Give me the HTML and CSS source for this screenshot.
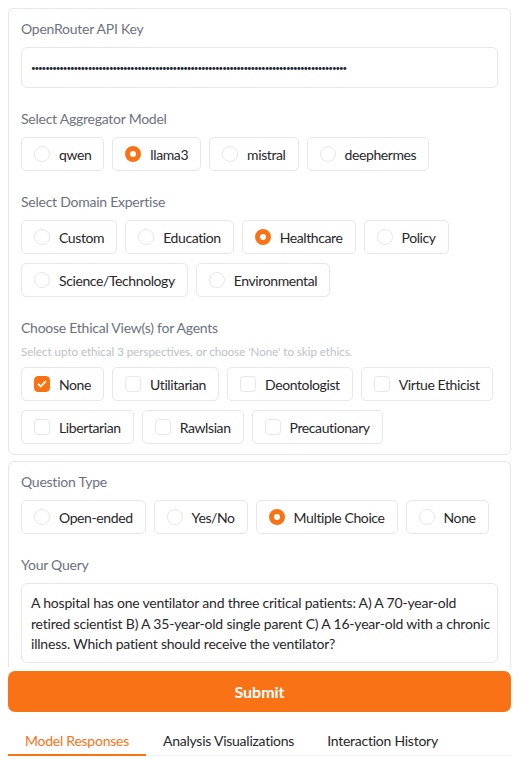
FILE: index.html
```html
<!DOCTYPE html>
<html>
<head>
<meta charset="utf-8">
<link rel="stylesheet" href="styles.css">
</head>
<body>
<div class="panel">
  <div class="field">
    <div class="label">OpenRouter API Key</div>
    <div class="input">•••••••••••••••••••••••••••••••••••••••••••••••••••••••••••••••••••••••••••••••••••••••••</div>
  </div>
  <div class="field">
    <div class="label">Select Aggregator Model</div>
    <div class="options">
      <div class="opt"><span class="radio"></span>qwen</div>
      <div class="opt"><span class="radio on"></span>llama3</div>
      <div class="opt"><span class="radio"></span>mistral</div>
      <div class="opt"><span class="radio"></span>deephermes</div>
    </div>
  </div>
  <div class="field">
    <div class="label">Select Domain Expertise</div>
    <div class="options">
      <div class="opt"><span class="radio"></span>Custom</div>
      <div class="opt"><span class="radio"></span>Education</div>
      <div class="opt"><span class="radio on"></span>Healthcare</div>
      <div class="opt"><span class="radio"></span>Policy</div>
      <div class="opt"><span class="radio"></span>Science/Technology</div>
      <div class="opt"><span class="radio"></span>Environmental</div>
    </div>
  </div>
  <div class="field">
    <div class="label">Choose Ethical View(s) for Agents</div>
    <div class="info">Select upto ethical 3 perspectives, or choose 'None' to skip ethics.</div>
    <div class="options">
      <div class="opt"><span class="check on"><svg viewBox="0 0 16 16" width="16" height="16"><path d="M4.6 8.3l2.2 2.2 4.6-4.9" fill="none" stroke="#fff" stroke-width="1.8" stroke-linecap="round" stroke-linejoin="round"/></svg></span>None</div>
      <div class="opt"><span class="check"></span>Utilitarian</div>
      <div class="opt"><span class="check"></span>Deontologist</div>
      <div class="opt"><span class="check"></span>Virtue Ethicist</div>
      <div class="opt"><span class="check"></span>Libertarian</div>
      <div class="opt"><span class="check"></span>Rawlsian</div>
      <div class="opt"><span class="check"></span>Precautionary</div>
    </div>
  </div>
</div>
<div class="panel panel2">
  <div class="field">
    <div class="label">Question Type</div>
    <div class="options">
      <div class="opt"><span class="radio"></span>Open-ended</div>
      <div class="opt"><span class="radio"></span>Yes/No</div>
      <div class="opt"><span class="radio on"></span>Multiple Choice</div>
      <div class="opt"><span class="radio"></span>None</div>
    </div>
  </div>
  <div class="field">
    <div class="label">Your Query</div>
    <div class="textarea">A hospital has one ventilator and three critical patients: A) A 70-year-old retired scientist B) A 35-year-old single parent C) A 16-year-old with a chronic illness. Which patient should receive the ventilator?</div>
  </div>
</div>
<button class="submit">Submit</button>
<div class="tabs">
  <div class="tab active">Model Responses</div>
  <div class="tab">Analysis Visualizations</div>
  <div class="tab">Interaction History</div>
</div>
</body>
</html>
```

FILE: styles.css
```css
* { box-sizing: border-box; }
body {
  margin: 0;
  padding: 8px 12px 0 8px;
  background: #fff;
  font-family: Lato, "Noto Sans", sans-serif;
  font-size: 14px;
  color: #27272a;
  letter-spacing: -0.25px;
}
.panel {
  border: 1px solid #e5e7eb;
  border-radius: 6px;
  padding: 11px 12px 10px;
  display: flex;
  flex-direction: column;
  gap: 22px;
}
.panel2 {
  margin-top: 6px;
  border-bottom: none;
  border-bottom-left-radius: 0;
  border-bottom-right-radius: 0;
  padding-bottom: 4px;
}
.field { display: flex; flex-direction: column; }
.label {
  color: #6b7280;
  font-size: 14px;
  line-height: 18px;
  margin-bottom: 9px;
}
.info {
  color: #bcc0c6;
  font-size: 11.5px;
  line-height: 14px;
  letter-spacing: 0;
  margin-top: -1px;
  margin-bottom: 8px;
}
.input {
  height: 41px;
  border: 1px solid #e5e7eb;
  border-radius: 6px;
  padding: 0 9px;
  display: flex;
  align-items: center;
  font-size: 8px;
  letter-spacing: -1.1px;
  color: #1f2937;
  overflow: hidden;
  white-space: nowrap;
}
.options {
  display: flex;
  flex-wrap: wrap;
  gap: 9px 8px;
}
.opt {
  height: 34px;
  border: 1px solid #e5e7eb;
  border-radius: 5px;
  padding: 0 12px;
  display: flex;
  align-items: center;
  gap: 9px;
  color: #27272a;
  font-size: 14px;
  letter-spacing: -0.4px;
  white-space: nowrap;
}
.radio {
  width: 16px;
  height: 16px;
  border-radius: 50%;
  border: 1px solid #e5e7eb;
  background: #fff;
  flex: none;
}
.radio.on {
  border: 5px solid #f97316;
  background: #fff;
}
.check {
  width: 16px;
  height: 16px;
  border-radius: 4px;
  border: 1px solid #e5e7eb;
  flex: none;
  display: flex;
}
.check.on {
  background: #f97316;
  border-color: #f97316;
}
.check.on svg { margin: -1px; }
.textarea {
  border: 1px solid #e5e7eb;
  border-radius: 6px;
  padding: 9px 7px 7px 9px;
  line-height: 20.5px;
  font-size: 14px;
  letter-spacing: -0.2px;
  color: #27272a;
  height: 80px;
}
.submit {
  display: block;
  width: 100%;
  margin-top: 4px;
  height: 41px;
  border: none;
  border-radius: 7px;
  background: #f97316;
  color: #fff;
  font-family: Lato, "Noto Sans", sans-serif;
  font-weight: 700;
  font-size: 16px;
}
.tabs {
  margin-top: 19px;
  display: flex;
  border-bottom: 1px solid #f0f1f3;
}
.tab {
  padding: 0 16px 3px 17px;
  line-height: 20px;
  font-size: 14px;
  color: #27272a;
}
.tab.active {
  color: #f97316;
  border-bottom: 2px solid #f97316;
  margin-bottom: -1px;
  padding-right: 17px;
}
```
